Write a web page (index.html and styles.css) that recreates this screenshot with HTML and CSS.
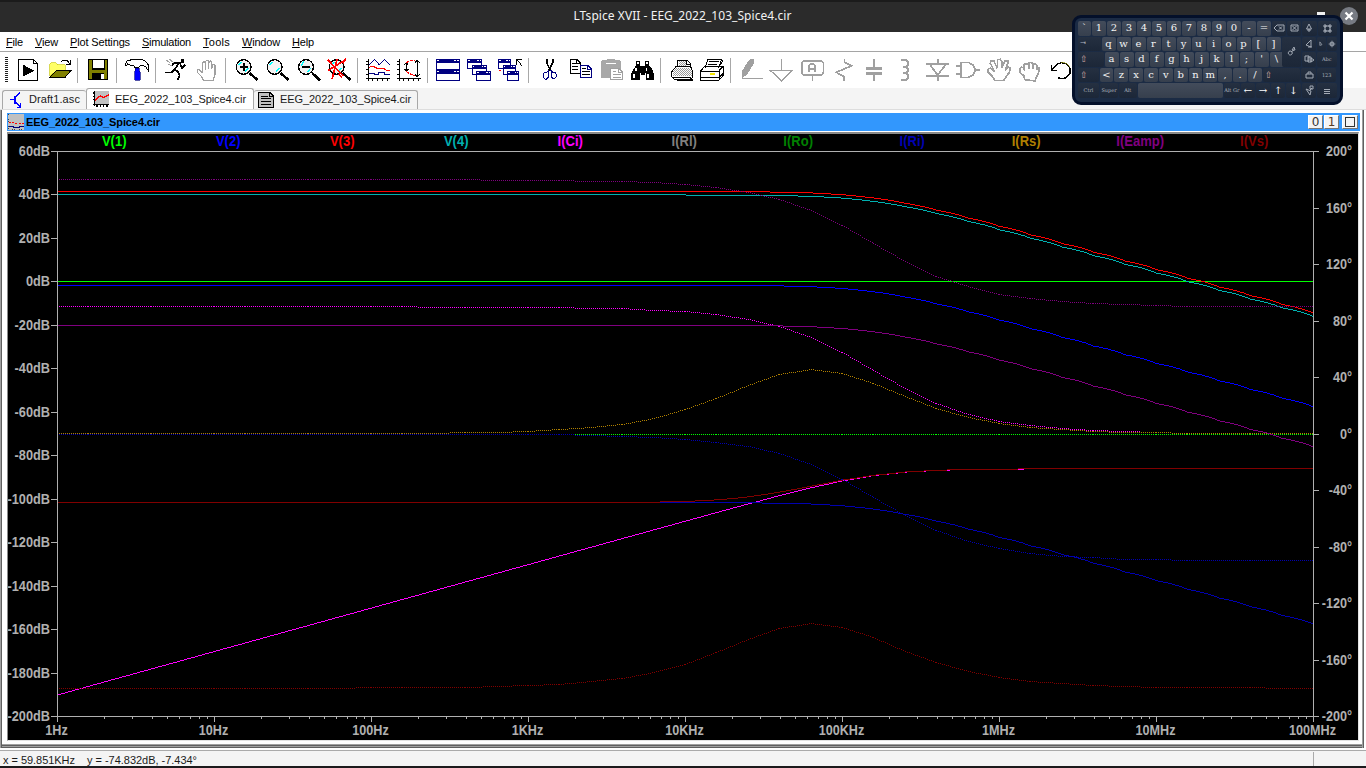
FILE: index.html
```html
<!DOCTYPE html>
<html lang="en">
<head>
<meta charset="utf-8">
<title>LTspice XVII - EEG_2022_103_Spice4.cir</title>
<link rel="stylesheet" href="styles.css">
</head>
<body>
<div class="app">
  <header class="titlebar"><span class="fit" data-w="218">LTspice XVII - EEG_2022_103_Spice4.cir</span></header>
  <nav class="menu">
    <span class="fit" data-w="17"><u>F</u>ile</span><span class="fit" data-w="23"><u>V</u>iew</span><span class="fit" data-w="60"><u>P</u>lot Settings</span><span class="fit" data-w="49"><u>S</u>imulation</span><span class="fit" data-w="27"><u>T</u>ools</span><span class="fit" data-w="38"><u>W</u>indow</span><span class="fit" data-w="22"><u>H</u>elp</span>
  </nav>
  <div class="toolbar">
    <i class="grip"></i>
    <svg viewBox="36 72 93 96"><path class="k" fill="#fff" d="M55.5 88.500h45l12 12v51h-57zM100.500 88.500v12h12"/><path d="M69 104v35l34-17z"/></svg>
    <svg viewBox="129 72 93 96"><path fill="#ff6" stroke="#c8c800" stroke-width="2" d="M149 139v-36l5-5h13l5 6h23v16h-24z"/><path class="k" fill="#808000" d="M151 141l20-21h43l-18 21z"/><path class="k n" d="M183 96l6-6h12l8 11M211 91v13h-13"/></svg>
    <i class="sep"></i>
    <svg viewBox="246 72 93 96"><path class="k" fill="#808000" d="M265.500 88.500h57v61h-54l-3-3z"/><path d="M275 88h40v31h-40zM277 128h36v23h-36z"/><path fill="#fff" d="M278 89h34v25h-34zM302 132h9v14h-9z"/></svg>
    <i class="sep"></i>
    <svg viewBox="363 72 93 96"><path class="k" fill="#fff" d="M375 104l6-11 18-5h24l12 5 10 11v18l-8-12-8-4h-8l-5 6h-11l-5-6h-8l-9-4-5 6z"/><path fill="#00f" stroke="#000080" stroke-width="2" d="M405 114h12v8l4 5v24h-17v-24l2-5z"/></svg>
    <i class="sep"></i>
    <svg viewBox="480 72 93 96"><circle cx="548" cy="93" r="6"/><path class="n" stroke="#000" stroke-width="5" d="M543 99h-21l-6 7M537 100l-13 18-9 9h-20M524 117l10 9 5 10-6 15M541 102l5 12 9-9"/><path class="n g" d="M498 90l11 7M508 87l14 12M503 102l13 6"/></svg>
    <svg viewBox="573 72 93 96"><path class="g" stroke-width="4" fill="#fff" d="M610 151l-6-12-12-12v-8h6l10 9v-28l4-6 5 5v20-25l4-4 5 4v22-19l5-4 4 5v20l2-13 5-3 3 4v28l-6 18z"/></svg>
    <i class="sep"></i>
    <svg viewBox="690 72 93 96"><use href="#lens"/><path class="n" stroke="#000" stroke-width="6" d="M719 111h24M731 99v24"/></svg>
    <svg viewBox="783 72 93 96"><use href="#lens" x="93"/></svg>
    <svg viewBox="876 72 93 96"><use href="#lens" x="187"/><path class="n" stroke="#000" stroke-width="6" d="M906 110h23"/></svg>
    <svg viewBox="969 72 93 96"><use href="#lens" x="279"/><path class="n" stroke="#f00" stroke-width="5" d="M983 89l48 50M1032 92l-47 29M1011 88l-15 60M1038 86l-9 14M1016 131l10 12"/></svg>
    <i class="sep"></i>
    <svg viewBox="66 72 93 96"><path class="k n" d="M85.500 86v66M78 145.500h72M78 94.500h8M78 104.500h8M78 119.500h8M78 134.500h8M97.500 144v9M112.500 144v9M127.500 144v9M142.500 144v9"/><path class="n b" d="M87 105l17-16 14 15 16-15 16 15M88 129h14v4h12v-6h18v6h18"/><path class="n r" d="M87 112l12-3 15 7 14-2 12 7h10"/></svg>
    <svg viewBox="159 72 93 96"><path class="k n" d="M178.500 86v66M171 145.500h72M171 94.500h8M171 104.500h8M171 119.500h8M171 134.500h8M190.500 144v9M205.500 144v9M220.500 144v9M235.500 144v9M199.500 99v24M193 104l6-6 6 6M193 117l6 6 6-6M232.500 91v49M225 98l7-7 8 7M225 133l7 7 8-7"/><path class="n r" stroke-dasharray="10 2" d="M199 98c8-6 17-7 27-8M199 124c7 7 17 10 27 13"/></svg>
    <i class="sep"></i>
    <svg viewBox="276 72 93 96"><path class="b" fill="#fff" d="M289.500 88.500h69v30h-69zM289.500 120.500h69v31h-69z"/><path fill="#000080" d="M288 87h72v11h-72zM288 119h72v12h-72z"/><path fill="#fff" d="M292 90h6v3h-6zM342 90h6v3h-6zM352 90h5v3h-5zM292 122h6v3h-6zM342 122h6v3h-6zM352 122h5v3h-5z"/></svg>
    <svg viewBox="369 72 93 96"><path class="b" fill="#fff" d="M382.500 88.500h42v27h-42zM396.500 106.500h42v27h-42zM409.500 124.500h42v27h-42z"/><path fill="#000080" d="M381 87h45v11h-45zM395 105h45v11h-45zM408 123h45v11h-45z"/><path fill="#fff" d="M384 90h5v3h-5zM412 90h4v3h-4zM419 90h4v3h-4zM398 108h5v3h-5zM426 108h4v3h-4zM433 108h4v3h-4zM411 126h5v3h-5zM439 126h4v3h-4zM446 126h4v3h-4z"/></svg>
    <svg viewBox="462 72 93 96"><g transform="translate(93 0)"><path class="b" fill="#fff" d="M382.500 88.500h36v27h-36zM396.500 106.500h36v27h-36zM409.500 124.500h34v27h-34z"/><path fill="#000080" d="M381 87h39v11h-39zM395 105h39v11h-39zM408 123h37v11h-37z"/><path fill="#fff" d="M384 90h5v3h-5zM406 90h4v3h-4zM413 90h4v3h-4zM398 108h5v3h-5zM420 108h4v3h-4zM427 108h4v3h-4zM411 126h5v3h-5zM431 126h4v3h-4zM438 126h4v3h-4z"/></g><path class="k n" d="M530 105V89h16M532 91l8 8 4 9"/><path fill="#f00" d="M477 119h6v4h-6z"/></svg>
    <i class="sep"></i>
    <svg viewBox="579 72 93 96"><path class="n" stroke="#000" stroke-width="5" d="M620 87v12l13 24M638 87v12l-13 24"/><path class="n b" stroke-width="5" d="M625 122l-6 6h-6l-3 6v9l5 4h5l4-5v-12zM633 122l6 5h6l4 6v8l-5 4h-5l-5-5v-10z"/></svg>
    <svg viewBox="672 72 93 96"><path class="k" fill="#fff" d="M691.500 88.500h19l11 11v32h-30z"/><path class="k n" d="M710 89v11h11M696 100h11M696 109h18M696 118h18"/><path class="b" fill="#fff" d="M720.500 105.500h23l12 12v25h-35z"/><path class="b n" d="M743 106v12h11"/><path class="k n" d="M726 115h12M726 124h23M726 133h23"/></svg>
    <svg viewBox="765 72 93 96"><path fill="#a8a8a8" d="M783 93l4-3h13l4-4h17l4 4h14l4 4v49l-4 2h-52l-4-3z"/><path fill="#fff" d="M797 98h32v3h-32z"/><path class="g" fill="#fff" d="M812.500 114.500h23l12 12v23h-35z"/><path class="g n" d="M835 115v12h12M818 125h11M818 133h24M818 141h24"/></svg>
    <svg viewBox="858 72 93 96"><path d="M888 93h12v15h16V93h12v14l8 10 6 15v19h-23v-23h-19v23h-27v-19l7-15 8-10zM903 110h11v24h-11z"/><path fill="#fff" d="M891 96h5v6h-5zM919 96h5v6h-5zM886 114h4v8h-4zM918 114h4v8h-4zM880 131h4v14h-4zM922 131h4v14h-4z"/></svg>
    <i class="sep"></i>
    <svg viewBox="975 72 93 96"><path class="k" fill="#fff" d="M1013 110l1-20h27l11 11v10M994 127l14-17h44l6 14v18l-6 5h-50l-8-7zM1013 147h43v5h-43z"/><path fill="url(#dots)" d="M1017 94h21v14h-21zM1000 124l10-11h39l6 12v14h-56z"/><path class="k n" d="M1040 91v12h11M996 142h56"/></svg>
    <svg viewBox="1068 72 93 96"><path class="k" fill="#fff" d="M1095 114l9-26h41l-10 26M1082.500 122.500l12-14h55v28l-13 14h-54zM1083 123h54v27M1137 122l13-13M1083 142h54l13-13"/><path class="k n" d="M1108 95h28M1105 102h27M1102 109h27M1149 89l-8 17M1084 152h52"/><path fill="#f5e500" d="M1110 129h16v5h-16z"/></svg>
    <i class="sep"></i>
    <svg viewBox="45 72 93 96"><path fill="#a0a0a0" d="M66 145v-22l20-32 7-5 9 1v12l-20 34z"/><path class="n g" d="M66 145.500h63"/></svg>
    <svg viewBox="138 72 93 96"><path class="n g" d="M183.500 87v32M150 120.500h68l-33 32z" stroke-width="4"/></svg>
    <svg viewBox="231 72 93 96"><path class="n g" stroke-width="5" d="M250 93h55l5 5v30l-5 6h-55l-5-6V98zM277 135v18M266 127v-20l5-5h9l5 5v20M266 116h19"/></svg>
    <svg viewBox="324 72 93 96"><path class="n g" stroke-width="5" d="M373 86v10l22 11-46 20 23 13v12"/></svg>
    <svg viewBox="417 72 93 96"><path class="n g" stroke-width="5" d="M462 87v28M462 132v20"/><path fill="#a0a0a0" d="M438 112h48v8h-48zM438 127h48v8h-48z"/></svg>
    <svg viewBox="510 72 93 96"><path class="n g" stroke-width="6" d="M543 90h14l8 6v8l-8 6h-9M548 110h9l8 6v8l-8 6h-9M548 130h9l8 6v8l-8 6h-14"/></svg>
    <svg viewBox="603 72 93 96"><path class="n g" stroke-width="5" d="M653 87v14M619 101h68M629 103l24 32 25-32M619 137h68M653 137v16"/></svg>
    <svg viewBox="696 72 93 96"><path class="n g" stroke-width="5" d="M723 97h23l14 9 6 14-6 14-14 8h-23zM709 107h14M709 132h14M766 120h14"/></svg>
    <svg viewBox="789 72 93 96"><path class="n g" stroke-width="5" d="M824 151l-8-13-12-12v-8l7-4 13 11-13-25 2-8h8l11 23 1-26 8-1 4 7v20l10-23 8 1v8l-7 20 10-10 6 4-4 12-10 14-7 10z"/></svg>
    <svg viewBox="882 72 93 96"><path class="n g" stroke-width="5" d="M914 149l-2-11-12-10-1-10 5-7 8 3 2 9-2-18 6-5 8 4v12-15l2-4h7l4 6v13l1-14 6-1 4 5v14l3-9 4 3-1 14-8 15-2 10z"/></svg>
    <svg viewBox="975 72 93 96"><path class="n" stroke="#000" stroke-width="4" d="M995 106v16h16M997 119l14-17 13-4 16 4 10 13v16l-11 12-11 3-15-3"/><path class="n" stroke="#8a8a00" stroke-width="2" d="M1023 96l16 4 10 11"/></svg>
    <svg class="defs"><defs><pattern id="dots" width="6" height="6" patternUnits="userSpaceOnUse"><path fill="#999" d="M0 0h3v3H0zM3 3h3v3H3z"/></pattern><g id="lens"><path class="n" stroke="#000" stroke-width="8" d="M749 129l24 22"/><circle cx="731" cy="111" r="22" fill="#f4f4f4" stroke="#000" stroke-width="4"/><path class="n" stroke="#0ff" stroke-width="4" d="M716 106l9-11M735 126l10-11"/></g></defs></svg>
  </div>
  <div class="tabs">
    <div class="tab t1"><svg viewBox="21 180 60 54"><path fill="none" stroke="#00f" stroke-width="4" d="M30 206h14M45 194v24M45 199l15-14M45 212l16 16M62 217v12H51"/></svg><span class="fit" data-w="51">Draft1.asc</span></div>
    <div class="tab t2"><svg viewBox="276 178 54 54"><path fill="#c0c0c0" d="M282 180h46v42h-46z"/><path fill="none" stroke="#000" stroke-width="4" d="M284 180v46M278 222h50M278 187h6M278 197h6M278 207h6M291 222v7M301 222v7M311 222v7M321 222v7"/><path fill="none" stroke="#f00" stroke-width="4" d="M286 209l15-14 10 6 16-9"/></svg><span class="fit" data-w="131">EEG_2022_103_Spice4.cir</span></div>
    <div class="tab t3"><svg viewBox="772 178 54 54"><path fill="#c0c0c0" stroke="#000" stroke-width="4" d="M777 182h33l11 11v35h-44z"/><path fill="none" stroke="#000" stroke-width="3" d="M784 193h20M784 201h30M784 209h30M784 218h30M810 182v11h11"/></svg><span class="fit" data-w="131">EEG_2022_103_Spice4.cir</span></div>
  </div>
  <main class="frame">
    <div class="docbar">
      <svg viewBox="24 252 48 48"><path fill="#c0c0c0" d="M24 252h48v48H24z"/><path stroke="#f00" stroke-width="3" stroke-dasharray="6 4" fill="none" d="M27 276h14l8 5h22"/><path stroke="#000080" stroke-width="4" fill="none" d="M27 290h13l5 3h10l5-3h12"/><path stroke="#000" stroke-width="2" stroke-dasharray="2 5" fill="none" d="M26 253v46h46"/></svg>
      <b class="fit" data-w="134">EEG_2022_103_Spice4.cir</b>
      <div class="winbtns"><span>0</span><span>1</span><span class="max"><i></i></span></div>
    </div>
    <svg class="plot" id="plot" viewBox="8 134 1350 606"></svg>
  </main>
  <footer class="status"><span class="fit" data-w="72">x = 59.851KHz</span><span class="fit" data-w="110">y = -74.832dB, -7.434°</span><i></i></footer>
</div>
<i class="minimise"></i>
<svg class="close" viewBox="0 0 18 18"><circle cx="9" cy="9" r="9" fill="#777b83"/><path d="M5.500 5.500l7 7M12.500 5.500l-7 7" stroke="#fff" stroke-width="2.200"/></svg>
<div class="keyboard" id="keyboard"></div>
<script src="app.js"></script>
</body>
</html>
```
FILE: styles.css
```css
* { box-sizing: border-box; }
body { margin: 0; background: #1c1a1c; overflow: hidden; font-family: "Liberation Sans", Arial, sans-serif; font-size: 11px; color: #1a1a1a; }
.app { width: 1366px; height: 766px; background: #fff; display: flex; flex-direction: column; }
.fit { white-space: nowrap; }
.titlebar { height: 32px; flex: none; background: #2b2b2b; border-top: 2px solid #1b1b1b; color: #f2f2f2; display: flex; align-items: center; justify-content: center; padding: 0 1px 3px 0; font: 12px "Noto Sans", sans-serif; }
.menu { height: 20px; flex: none; background: #fff; border-bottom: 1px solid #a5a5a5; padding: 0 6px; display: flex; gap: 12px; align-items: center; color: #000; }
.menu u { text-underline-offset: 1px; }
.toolbar { height: 36px; flex: none; background: #fff; display: flex; align-items: center; }
.toolbar svg { width: 31px; height: 32px; flex: none; shape-rendering: crispEdges; }
.toolbar svg.defs { width: 0; height: 0; }
.grip { width: 3px; height: 26px; margin: 0 4px 0 5px; background: repeating-linear-gradient(#222 0 1px, #fff 1px 2px); }
.sep { width: 1px; height: 25px; margin: 0 4px 0 3px; background: #a8a8a8; flex: none; }
.k { stroke: #000; stroke-width: 3px; }
.b { stroke: #000080; stroke-width: 3px; }
.r { stroke: #f00; stroke-width: 3px; }
.g { stroke: #a0a0a0; }
.g:not([stroke-width]) { stroke-width: 3px; }
.n { fill: none; }
.tabs { height: 22px; flex: none; background: #f4f4f4; border-bottom: 1px solid #ddd; display: flex; align-items: flex-end; padding-left: 2px; }
.tab { display: flex; align-items: center; border: 1px solid #a8a8a8; border-bottom: 0; border-radius: 3px 3px 0 0; height: 19px; background: #f4f4f4; }
.tab svg { width: 18px; height: 18px; flex: none; shape-rendering: crispEdges; }
.t1 { width: 84px; padding-left: 4px; border-right: 0; }
.t1 svg { width: 20px; margin-right: 2px; }
.t1 span, .t3 span { margin-bottom: 2px; }
.t2 { width: 168px; height: 21px; background: #fff; padding-left: 5px; }
.t2 svg { margin-right: 5px; }
.t3 { width: 164px; padding-left: 3px; border-left: 0; }
.t3 svg { margin-right: 5px; }
.frame { height: 638px; flex: none; background: linear-gradient(#a0a0a0 0 1px, #606060 1px 2px, #a0a0a0 2px 3px, #606060 3px 4px) 0 100% / 1363px 4px no-repeat #fff; border-left: 1px solid #a0a0a0; border-right: 2px solid #fff; box-shadow: inset 1px 0 #606060, inset -1px 0 #606060, inset -2px 0 #a0a0a0; padding: 3px 3px 0 6px; }
.docbar { height: 18px; width: 1353px; background: #3297fd; display: flex; align-items: center; color: #000; padding: 0 2px 0 1px; }
.docbar > svg { width: 16px; height: 16px; shape-rendering: crispEdges; margin-right: 2px; }
.winbtns { margin-left: auto; display: flex; gap: 1px; }
.winbtns span { width: 15px; height: 14px; background: #f4f4f4; border: 1px solid #fff; border-right-color: #777; border-bottom-color: #777; font: 12px/12px "DejaVu Sans", sans-serif; text-align: center; color: #333; }
.winbtns span + span { color: #5a3a20; }
.winbtns .max { width: 16px; margin-left: 2px; padding: 1px 2px; }
.max i { display: block; width: 10px; height: 10px; border: 1px solid #333; }
.plot { display: block; margin: 1px 0 0 0; width: 1352px; height: 609px; background: #000; border: solid #8a8a8a; border-width: 2px 1px 1px 1px; border-right-color: #e3e3e3; border-bottom-color: #e3e3e3; shape-rendering: crispEdges; font: bold 14px "Liberation Sans", Arial, sans-serif; }
.status { height: 16px; flex: none; margin-top: 2px; background: #f4f4f4; border-top: 1px solid #aaa; display: flex; align-items: center; padding: 3px 0 0 3px; gap: 12px; }
.status i { width: 1px; height: 14px; margin: -2px 52px 0 auto; background: #aaa; }
.minimise { position: absolute; left: 1317px; top: 12px; width: 8px; height: 4px; background: #f0f0f0; }
.close { position: absolute; left: 1340px; top: 7px; width: 18px; height: 18px; }
.keyboard { position: absolute; left: 1072px; top: 15px; width: 271px; height: 90px; border-radius: 9px; background: #1b2b44; border: 3px solid #04102a; padding: 3px; display: flex; flex-direction: column; font: 10px "DejaVu Serif", serif; color: #f4f4f4; }
.keyrow { display: flex; height: 15.600px; }
.key { flex: none; height: 14.600px; margin-right: 1px; border-radius: 2px; background: linear-gradient(#434c5b, #363f4d); display: flex; align-items: center; justify-content: center; line-height: 1; white-space: nowrap; }
.key.dark { background: linear-gradient(#253041, #1c2738); color: #aeb4be; font-size: 7px; }
.key.dark svg { width: 12px; height: 12px; fill: none; stroke: #a4abb6; stroke-width: 1px; }
.key.dark.left { justify-content: flex-start; padding-left: 2px; }
.key.dark.shift { color: #d0a8a4; font-size: 9px; }
.key.word { font-size: 5px; }
.key.arrow { font-size: 10px; color: #fff; }
.key.enter { height: 30.200px; z-index: 1; padding-bottom: 0; }
```
FILE: app.js
```js
var NS = "http://www.w3.org/2000/svg";
var plot = document.getElementById("plot");

function add(tag, attrs, text) {
  var e = document.createElementNS(NS, tag);
  for (var a in attrs) e.setAttribute(a, attrs[a]);
  if (text) e.textContent = text;
  plot.appendChild(e);
  return e;
}

// Plot area: 1 Hz at x=57, 157 px per decade; 60 dB at y=151, 2.173 px per dB.
var FC = 159155, FZ = 26600, PX_DB = 565 / 260, PX_DEG = 565 / 400;
function db(v) { return 151 + (60 - v) * PX_DB; }
function deg(v) { return 433.5 - v * PX_DEG; }
function at(r) { return Math.atan(r) * 180 / Math.PI; }

// Complex responses as [re, im] of (a + jb) / (1 + jf/FC).
function over(a, b, f) {
  var r = f / FC, m = 1 + r * r;
  return [(a + b * r) / m, (b - a * r) / m];
}
function pole(f) { return over(1, 0, f); }
function rise(f) { return over(0, f, f); }
function shelf(f) { return over(1, f / FZ, f); }

// Magnitude: samples five per decade, complex values interpolated linearly in frequency.
function magnitude(color, gain, h) {
  var d = "", start = 57, row = null;
  for (var x = 57; x <= 1313; x++) {
    var u = (x - 57) / 31.4, k = Math.min(39, Math.floor(u));
    var f0 = Math.pow(10, k / 5), f1 = Math.pow(10, (k + 1) / 5), f = Math.pow(10, u / 5);
    var t = (f - f0) / (f1 - f0), a = h(f0), b = h(f1);
    var re = a[0] + (b[0] - a[0]) * t, im = a[1] + (b[1] - a[1]) * t;
    var y = Math.round(db(gain + 20 * Math.log10(Math.hypot(re, im))));
    if (row === null) row = y;
    if (y !== row || x === 1313) {
      d += "M" + start + " " + row + "h" + (x - start) + "v1h" + (start - x) + "z";
      start = x; row = y;
    }
  }
  add("path", { fill: color, d: d });
}

// Phase: dotted, the pattern restarts at each sample.
function phase(color, fn) {
  var pts = [], k, d = "";
  for (k = 0; k <= 40; k++) pts.push([Math.round(57 + 31.4 * k), Math.round(deg(fn(Math.pow(10, k / 5))))]);
  for (k = 0; k < 40; k++) {
    var a = pts[k], b = pts[k + 1];
    for (var x = a[0]; x <= b[0]; x += 2) {
      var y = Math.round(a[1] + (b[1] - a[1]) * (x - a[0]) / (b[0] - a[0]));
      d += "M" + x + " " + y + "h1v1h-1z";
    }
  }
  add("path", { fill: color, d: d });
}

magnitude("#00ff00", 0, function () { return [1, 0]; });
phase("#00ff00", function () { return 0; });
magnitude("#0000ff", -1.58, pole);
magnitude("#ff0000", 41.58, pole);
magnitude("#00b0b0", 40, pole);
magnitude("#ff00ff", -190.08, rise);
phase("#ff00ff", function (f) { return 90 - at(f / FC); });
magnitude("#0000b0", -101.58, pole);
phase("#0000b0", function (f) { return -at(f / FC); });
phase("#b08000", function (f) { return at(f / FZ) - at(f / FC); });
magnitude("#800080", -20, pole);
phase("#800080", function (f) { return 180 - at(f / FC); });
magnitude("#800000", -101.57, shelf);
phase("#800000", function (f) { return -180 + at(f / FZ) - at(f / FC); });

var GREY = "#b0b0b0";
function bar(x, y, w, h) { add("rect", { x: x, y: y, width: w, height: h, fill: GREY }); }
function label(x, y, s, anchor, squeeze, color) {
  var t = add("text", { x: x, y: y, "text-anchor": anchor, fill: color || GREY }, s);
  t.setAttribute("textLength", t.getComputedTextLength() * squeeze);
  t.setAttribute("lengthAdjust", "spacingAndGlyphs");
}
bar(51, 151, 1268, 1); bar(51, 716, 1268, 1);
bar(57, 151, 1, 571); bar(1313, 151, 1, 571);
var i, m;
for (i = 0; i <= 13; i++) {
  var ty = Math.round(151 + i * 565 / 13);
  bar(51, ty, 6, 1);
  label(50, ty + 5, (60 - 20 * i) + "dB", "end", 0.91);
}
for (i = 0; i <= 10; i++) {
  var ry = Math.round(151 + i * 56.5);
  bar(1313, ry, 6, 1);
  label(1352, ry + 5, (200 - 40 * i) + "°", "end", 0.9);
}
["1Hz", "10Hz", "100Hz", "1KHz", "10KHz", "100KHz", "1MHz", "10MHz", "100MHz"].forEach(function (s, n) {
  var x = 57 + 157 * n;
  bar(x, 716, 1, 6);
  label(x - 0.5, 735, s, "middle", 0.9);
  if (n < 8) for (m = 2; m < 10; m++) bar(Math.round(x + 157 * Math.log10(m)), 717, 1, 2);
});
[["V(1)", "#00ff00"], ["V(2)", "#0000ff"], ["V(3)", "#ff0000"], ["V(4)", "#00b0b0"], ["I(Ci)", "#ff00ff"], ["I(Rl)", "#808080"],
 ["I(Ro)", "#008000"], ["I(Ri)", "#0000b0"], ["I(Rs)", "#b08000"], ["I(Eamp)", "#800080"], ["I(Vs)", "#800000"]].forEach(function (l, n) {
  label(114.2 + 114 * n, 146, l[0], "middle", 0.93, l[1]);
});

// Spread each caption over its column width.
document.querySelectorAll(".fit").forEach(function (e) {
  var gap = (e.dataset.w - e.getBoundingClientRect().width) / e.textContent.length;
  e.style.letterSpacing = gap.toFixed(3) + "px";
});

// On-screen keyboard: [label or icon path, width, classes]
function letters(s, w) { return s.split(" ").map(function (c) { return [c, w, ""]; }); }
var D = "dark", W = "dark word", L = "dark left", S = "dark left shift", A = "dark arrow";
var rows = [
  [["`", 14, ""]].concat(letters("1 2 3 4 5 6 7 8 9 0 - =", 15), [["path:M1 6l3-3h7v6H4zM6 4.500l3 3M9 4.500l-3 3", 15, D], ["path:M3 3h7v6H3zM4.500 4l4 4M8.500 4l-4 4", 15, D], ["path:M6 2l2.500 5h-5zM4 8h4M6 7v3", 15.5, D], ["path:M4 4h5v5H4zM3 3h2v2H3zM8 3h2v2H8zM3 8h2v2H3zM8 8h2v2H8z", 20.5, D]]),
  [["⇥", 23.5, L]].concat(letters("q w e r t y u i o p [ ]", 15), [["path:M9 1l-2 3h3zM5 5a2 2 0 1 0 2 3a2 2 0 0 0-2-3M6 6l3-2", 20, D + " enter"], ["path:M8 2v7L3 7zM5 9l4 0", 15.5, D], ["path:M4 3v5l3-1z", 9.5, D], ["path:M6 2v8M2 6h8M4 4h4v4H4z", 11, D]]),
  [["⇧", 26.500, S]].concat(letters("a s d f g h j k l ; ' \\", 15), [["", 17, D], ["path:M2 3h4v5H2zM5 4h3v5H5zM8 5l3 2-3 2z", 15.5, D], ["Abc", 20.5, W]]),
  [["⇧", 21.5, S]].concat(letters("< z x c v b n m , . /", 14.85), [["⇧", 38.65, S], ["path:M3 5h7v4H3zM5 5V3h3v2", 15.5, D], ["123", 20.5, W]]),
  [["Ctrl", 22, W], ["Super", 19, W], ["Alt", 18.5, W], ["", 86, ""], ["Alt Gr", 17.5, W],
   ["←", 15, A], ["→", 15, A], ["↑", 15, A], ["↓", 15.5, A], ["path:M3 4l4 6 1-4zM7 1h3v3H7zM7 5l2-2", 15.5, D], ["path:M3 4.500h6M3 6.500h6M3 8.500h6", 20.5, D]]
];
var board = document.getElementById("keyboard");
rows.forEach(function (r) {
  var row = document.createElement("div");
  row.className = "keyrow";
  r.forEach(function (k) {
    var s = document.createElement("span");
    s.className = "key " + k[2];
    s.style.width = (k[1] - 1) + "px";
    if (k[0].indexOf("path:") === 0) {
      var svg = document.createElementNS(NS, "svg"), p = document.createElementNS(NS, "path");
      svg.setAttribute("viewBox", "0 0 12 12");
      p.setAttribute("d", k[0].slice(5));
      svg.appendChild(p);
      s.appendChild(svg);
    } else s.textContent = k[0];
    row.appendChild(s);
  });
  board.appendChild(row);
});
```
